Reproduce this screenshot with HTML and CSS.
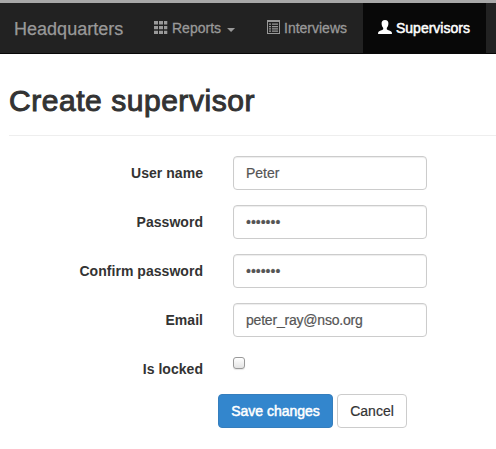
FILE: index.html
```html
<!DOCTYPE html>
<html lang="en">
<head>
<meta charset="utf-8">
<title>Create supervisor</title>
<link rel="stylesheet" href="styles.css">
</head>
<body>
<header class="navbar">
  <a class="brand">Headquarters</a>
  <nav class="nav">
    <a class="nav-item reports">
      <svg class="icon" width="14" height="14" viewBox="0 0 14 14" fill="currentColor"><path d="M0 0h4v3.500H0zM5 0h4v3.500H5zM10 0h3.300v3.500H10zM0 5h4v3.300H0zM5 5h4v3.300H5zM10 5h3.300v3.300H10zM0 9.700h4V13H0zM5 9.700h4V13H5zM10 9.700h3.300V13H10z"/></svg>
      <span class="nav-text">Reports</span><span class="caret"></span>
    </a>
    <a class="nav-item interviews">
      <svg class="icon" width="14" height="14" viewBox="0 0 14 14" fill="currentColor"><path fill-rule="evenodd" d="M0 0h13v14H0zM1 2v11h11V2z"/><path d="M2 3.500h2v1.300H2zM5 3.500h6v1.300H5zM2 6h2v1.200H2zM5 6h6v1.200H5zM2 8.200h2v1.200H2zM5 8.200h6v1.200H5zM2 10.400h2v1.300H2zM5 10.400h6v1.300H5z"/></svg>
      <span class="nav-text">Interviews</span>
    </a>
    <a class="nav-item supervisors active">
      <svg class="icon" width="14" height="14" viewBox="0 0 14 14" fill="currentColor"><path d="M7 0C4.600 0 3.400 1.500 3.600 3.800C3.700 5.800 4.300 7 5.200 7.900V9.200C4.500 10.300 1 10.700.3 12L0 14h14l-.3-2C13 10.700 9.500 10.300 8.800 9.200V7.900C9.700 7 10.300 5.800 10.400 3.800C10.600 1.500 9.400 0 7 0z"/></svg>
      <span class="nav-text">Supervisors</span>
    </a>
  </nav>
</header>
<main class="page">
  <h1 class="title">Create supervisor</h1>
  <form class="form">
    <label class="label" for="user">User name</label>
    <input class="control" id="user" type="text" value="Peter">
    <label class="label" for="pass">Password</label>
    <input class="control" id="pass" type="password" value="1234567">
    <label class="label" for="confirm">Confirm password</label>
    <input class="control" id="confirm" type="password" value="1234567">
    <label class="label" for="email">Email</label>
    <input class="control email" id="email" type="text" value="peter_ray@nso.org">
    <label class="label" for="locked">Is locked</label>
    <input class="check" id="locked" type="checkbox">
  </form>
  <div class="actions">
    <button class="btn primary" type="button">Save changes</button>
    <button class="btn cancel" type="button">Cancel</button>
  </div>
</main>
</body>
</html>
```
FILE: styles.css
```css
* { box-sizing: border-box; }
body {
  margin: 0;
  background: #fff;
  color: #333;
  font: 14px/20px "Liberation Sans", Arial, sans-serif;
  overflow: hidden;
}
.navbar {
  display: flex;
  height: 54px;
  border-top: 3px solid #a8a8a8;
  border-bottom: 1px solid #080808;
  background: #222;
  color: #999;
}
.brand {
  width: 139px;
  padding: 16px 0 0 14px;
  font-size: 18px;
  letter-spacing: 0.02px;
  -webkit-text-stroke: 0.25px currentColor;
}
.nav { display: flex; }
.nav-item {
  display: flex;
  height: 50px;
  padding: 15px 0 0 15px;
  -webkit-text-stroke: 0.3px currentColor;
}
.icon { flex: none; margin: 3px 4px 0 0; }
.reports { width: 113px; }
.interviews { width: 111px; }
.interviews .icon { margin-right: 3px; margin-top: 2px; }
.supervisors { width: 123px; }
.supervisors .icon { margin-top: 2px; }
.active { background: #080808; color: #fff; -webkit-text-stroke-width: 0.5px; }
.caret {
  margin: 10px 0 0 6px;
  width: 8px;
  height: 4px;
  background: currentColor;
  clip-path: polygon(0 0, 100% 0, 50% 100%);
}
.page { padding: 27px 0 0 9px; }
.title {
  height: 55px;
  margin: 0 0 20px;
  padding-top: 3px;
  border-bottom: 1px solid #eee;
  font-size: 30px;
  font-weight: 400;
  line-height: 33px;
  letter-spacing: 0.54px;
  -webkit-text-stroke: 1px currentColor;
}
.form {
  display: grid;
  grid-template-columns: 194px 194px;
  column-gap: 30px;
  row-gap: 15px;
  grid-auto-rows: 34px;
}
.label {
  padding-top: 7px;
  text-align: right;
  font-weight: 700;
  letter-spacing: 0.04px;
}
.control {
  width: 194px;
  height: 34px;
  margin: 0;
  padding: 6px 12px;
  border: 1px solid #ccc;
  border-radius: 4px;
  background: #fff;
  box-shadow: inset 0 1px 1px rgba(0, 0, 0, 0.075);
  color: #555;
  font: inherit;
  -webkit-text-stroke: 0.2px currentColor;
}
.email { letter-spacing: -0.2px; }
.check {
  appearance: none;
  width: 12px;
  height: 12px;
  margin: 5px 0 0;
  border: 1px solid #999;
  border-radius: 3px;
  background: linear-gradient(#fff, #e4e4e4);
  box-shadow: 0 1px 1px rgba(0, 0, 0, 0.1);
}
.actions { display: flex; gap: 4px; margin: 8px 0 0 209px; }
.btn {
  height: 34px;
  padding: 0;
  border: 1px solid #ccc;
  border-radius: 4px;
  background: #fff;
  color: #333;
  font: inherit;
  -webkit-text-stroke: 0.2px currentColor;
}
.primary {
  width: 115px;
  border-color: #357ebd;
  background: #3386cd;
  color: #fff;
  -webkit-text-stroke: 0.5px currentColor;
}
.cancel { width: 70px; }
```
